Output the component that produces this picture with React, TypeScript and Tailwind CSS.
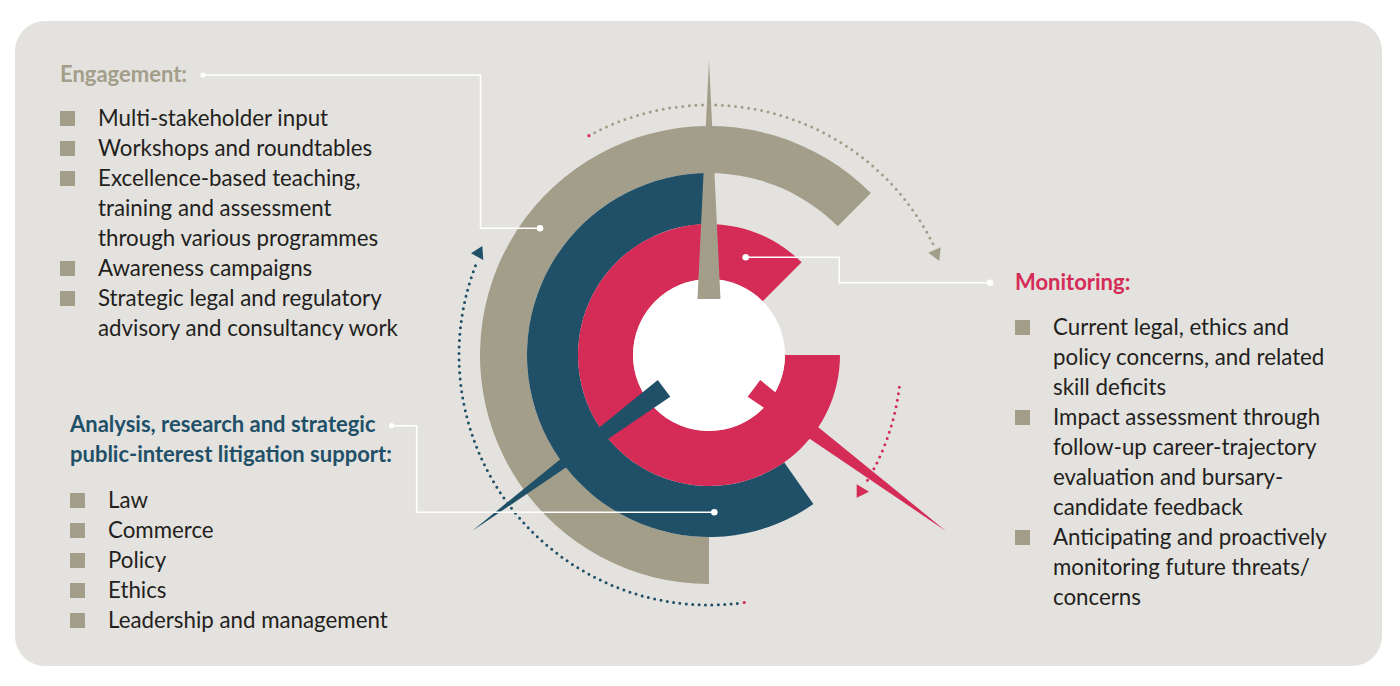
import React from 'react';

// centre of the rings, in page coordinates
const CX = 709;
const CY = 355;

const GRAY = '#a39e8a';
const BLUE = '#1f5068';
const RED = '#d42c57';

const pt = (r: number, deg: number): [number, number] => {
  const a = (deg * Math.PI) / 180;
  return [CX + r * Math.cos(a), CY + r * Math.sin(a)];
};

const ring = (r1: number, r2: number, a0: number, a1: number) => {
  const large = a1 - a0 > 180 ? 1 : 0;
  const [x0, y0] = pt(r2, a0);
  const [x1, y1] = pt(r2, a1);
  const [x2, y2] = pt(r1, a1);
  const [x3, y3] = pt(r1, a0);
  return `M${x0} ${y0} A${r2} ${r2} 0 ${large} 1 ${x1} ${y1} L${x2} ${y2} A${r1} ${r1} 0 ${large} 0 ${x3} ${y3} Z`;
};

const arc = (r: number, a0: number, a1: number) => {
  const large = a1 - a0 > 180 ? 1 : 0;
  const [x0, y0] = pt(r, a0);
  const [x1, y1] = pt(r, a1);
  return `M${x0} ${y0} A${r} ${r} 0 ${large} 1 ${x1} ${y1}`;
};

const needle = (deg: number, w = 11.5) => {
  const a = (deg * Math.PI) / 180;
  const nx = -Math.sin(a);
  const ny = Math.cos(a);
  const [tx, ty] = pt(295, deg);
  const [bx, by] = pt(56, deg);
  return `${tx},${ty} ${bx + w * nx},${by + w * ny} ${bx - w * nx},${by - w * ny}`;
};

const Diagram: React.FC = () => {
  const [gx, gy] = pt(250, 241.3);
  const [bx, by] = pt(250, 81.9);
  return (
    <svg
      width={560}
      height={645}
      viewBox="440 21 560 645"
      className="block overflow-visible"
    >
      {/* rings */}
      <path d={ring(182, 229, 90, 315)} fill={GRAY} />
      <path d={ring(131, 182, 55, 270)} fill={BLUE} />
      <path d={ring(76, 131, 0, 315)} fill={RED} />
      <circle cx={CX} cy={CY} r={76} fill="#ffffff" />

      {/* needles */}
      <polygon points={needle(-90)} fill={GRAY} />
      <polygon points={needle(143.4, 10.5)} fill={BLUE} />
      <polygon points={needle(36.6, 10.5)} fill={RED} />

      {/* dotted arcs */}
      <circle cx={gx} cy={gy} r={1.6} fill={RED} />
      <path
        d={arc(250, 242.8, 333.7)}
        fill="none"
        stroke={GRAY}
        strokeWidth={3}
        strokeLinecap="round"
        strokeDasharray="0 6.6"
      />
      <polygon points="928.3,252.7 940.7,247.3 939.3,261" fill={GRAY} />

      <circle cx={bx} cy={by} r={1.6} fill={RED} />
      <path
        d={arc(250, 83.5, 201.7)}
        fill="none"
        stroke={BLUE}
        strokeWidth={3}
        strokeLinecap="round"
        strokeDasharray="0 6.4"
      />
      <polygon points="471,253.3 482.3,246 483.3,260" fill={BLUE} />

      <path
        d="M899.3 387.3 A238 238 0 0 1 865.7 483.3"
        fill="none"
        stroke={RED}
        strokeWidth={3}
        strokeLinecap="round"
        strokeDasharray="0 6.6"
      />
      <polygon points="856.7,484.3 869,491.7 856.7,497.7" fill={RED} />

      {/* connectors */}
      <g stroke="#ffffff" strokeWidth={1.6} fill="none">
        <path d="M203 75 H480.5 V228.3 H540" />
        <path d="M745.7 257.3 H839.3 V282.7 H990" />
        <path d="M391.5 425.7 H416.7 V512.3 H714.3" />
      </g>
      <g fill="#ffffff">
        <circle cx={203} cy={75} r={2.6} />
        <circle cx={540} cy={228.3} r={3.3} />
        <circle cx={745.7} cy={257.3} r={3.3} />
        <circle cx={990} cy={282.7} r={3.3} />
        <circle cx={391.5} cy={425.7} r={2.6} />
        <circle cx={714.3} cy={512.3} r={3.3} />
      </g>
    </svg>
  );
};

const Item: React.FC<{ children: React.ReactNode }> = ({ children }) => (
  <li className="flex">
    <span className="mt-[8px] mr-[23px] h-[15px] w-[15px] shrink-0 bg-[#a39e8a]" />
    <span>{children}</span>
  </li>
);

export default function App() {
  return (
    <div className="min-h-screen bg-white pt-[21px] pl-[15px] font-['Lato',sans-serif] text-[22.3px] leading-[30px] text-[#231f20]">
      <div className="flex h-[645px] w-[1367px] rounded-[30px] bg-[#e3e2de]">
        {/* left column */}
        <div className="flex w-[425px] shrink-0 flex-col pt-[38px] pl-[45px]">
          <h2 className="text-[22px] font-bold text-[#a39e8a]">Engagement:</h2>
          <ul className="mt-[14px]">
            <Item>Multi-stakeholder input</Item>
            <Item>Workshops and roundtables</Item>
            <Item>
              Excellence-based teaching,
              <br />
              training and assessment
              <br />
              through various programmes
            </Item>
            <Item>Awareness campaigns</Item>
            <Item>
              Strategic legal and regulatory
              <br />
              advisory and consultancy work
            </Item>
          </ul>

          <div className="mt-[66px] ml-[10px]">
            <h2 className="text-[22px] font-bold text-[#1f5068]">
              Analysis, research and strategic
              <br />
              public-interest litigation support:
            </h2>
            <ul className="mt-[16px]">
              <Item>Law</Item>
              <Item>Commerce</Item>
              <Item>Policy</Item>
              <Item>Ethics</Item>
              <Item>Leadership and management</Item>
            </ul>
          </div>
        </div>

        {/* diagram */}
        <div className="w-[560px] shrink-0">
          <Diagram />
        </div>

        {/* right column */}
        <div className="flex-1 pt-[246px] pl-[15px]">
          <h2 className="text-[22px] font-bold text-[#d42c57]">Monitoring:</h2>
          <ul className="mt-[15px]">
            <Item>
              Current legal, ethics and
              <br />
              policy concerns, and related
              <br />
              skill deficits
            </Item>
            <Item>
              Impact assessment through
              <br />
              follow-up career-trajectory
              <br />
              evaluation and bursary-
              <br />
              candidate feedback
            </Item>
            <Item>
              Anticipating and proactively
              <br />
              monitoring future threats/
              <br />
              concerns
            </Item>
          </ul>
        </div>
      </div>
    </div>
  );
}
